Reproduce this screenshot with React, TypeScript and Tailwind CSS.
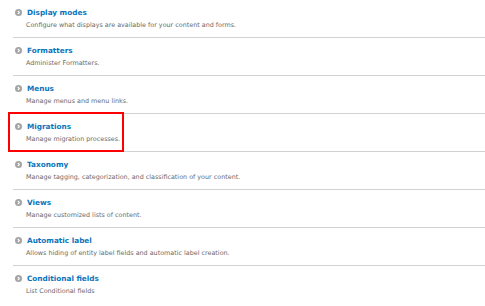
import type { ReactNode } from "react"

const items = [
  { title: "Display modes", description: "Configure what displays are available for your content and forms." },
  { title: "Formatters", description: "Administer Formatters." },
  { title: "Menus", description: "Manage menus and menu links." },
  { title: "Migrations", description: "Manage migration processes.", highlight: true },
  { title: "Taxonomy", description: "Manage tagging, categorization, and classification of your content." },
  { title: "Views", description: "Manage customized lists of content." },
  { title: "Automatic label", description: "Allows hiding of entity label fields and automatic label creation." },
  { title: "Conditional fields", description: "List Conditional fields" },
]

function ArrowIcon() {
  return (
    <svg viewBox="0 0 14 14" className="size-[7px] shrink-0">
      <circle cx="7" cy="7" r="7" fill="#a3a3a3" />
      <path d="M5.6 3.8 8.8 7 5.6 10.2" fill="none" stroke="#fff" strokeWidth="2.2" />
    </svg>
  )
}

function Row({ title, description, highlight }: { title: string; description: string; highlight?: boolean }) {
  let marker: ReactNode = null
  if (highlight) {
    marker = <div className="pointer-events-none absolute -left-[5px] -top-[2px] h-[40px] w-[116px] border-2 border-[#ff0000]" />
  }
  return (
    <li className="relative h-[38px] border-b border-[#d2d2d2] last:border-b-0">
      {marker}
      <div className="flex items-center gap-[5px] pl-[2px] pt-[8px]">
        <ArrowIcon />
        <a className="text-[7.3px] font-bold leading-[9px] text-[#0a74bc]">{title}</a>
      </div>
      <p className="mt-[4px] pl-[13px] text-[6.4px] leading-[8px] text-[#6a6a6a]">{description}</p>
    </li>
  )
}

export default function App() {
  return (
    <main className="h-[306px] w-[485px] overflow-hidden bg-white font-['DejaVu_Sans',Verdana,sans-serif]">
      <ul className="ml-[13px]">
        {items.map((item) => (
          <Row key={item.title} {...item} />
        ))}
      </ul>
    </main>
  )
}
